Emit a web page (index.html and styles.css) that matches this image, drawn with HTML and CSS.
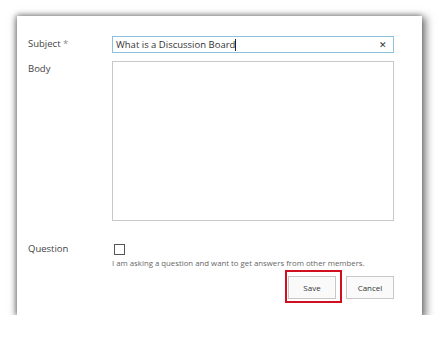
FILE: index.html
```html
<!DOCTYPE html>
<html lang="en">
<head>
  <meta charset="UTF-8" />
  <title>New Discussion</title>
  <link rel="stylesheet" href="styles.css">
</head>
<body>
  <div class="card">
    <div class="row">
      <label class="label" for="subject">Subject <span class="req">*</span></label>
      <div class="field subject-box">
        <span class="subject-text">What is a Discussion Board</span><span class="caret"></span>
        <span class="clear">&#x2715;</span>
      </div>
    </div>

    <div class="row">
      <label class="label">Body</label>
      <div class="field body-box"></div>
    </div>

    <div class="row question-row">
      <label class="label">Question</label>
      <div class="field">
        <span class="check"></span>
        <div class="hint">I am asking a question and want to get answers from other members.</div>
      </div>
    </div>

    <div class="actions">
      <span class="highlight"><button class="btn">Save</button></span>
      <button class="btn">Cancel</button>
    </div>
  </div>
</body>
</html>
```

FILE: styles.css
```css
body {
  margin: 0;
  padding: 16px 0 0 17px;
  background: #fff;
  font-family: "Open Sans", "Noto Sans", sans-serif;
}
.card {
  width: 405px;
  height: 299px;
  box-sizing: border-box;
  padding: 20px 28px 0 11px;
  background: #fff;
  box-shadow: 2px 3px 8px 2px rgba(0,0,0,0.5), -1px -1px 5px rgba(0,0,0,0.3);
}
.row {
  display: flex;
  margin-bottom: 8px;
}
.label {
  width: 84px;
  flex: none;
  font-size: 9.5px;
  color: #444;
  padding-top: 1px;
}
.req {
  color: #888;
}
.field {
  flex: 1;
}
.subject-box {
  height: 17px;
  box-sizing: border-box;
  border: 1px solid #8cc0dd;
  display: flex;
  align-items: center;
  padding: 0 0 0 3px;
  font-size: 9.5px;
  color: #333;
}
.caret {
  width: 1px;
  height: 12px;
  background: #222;
}
.clear {
  margin-left: auto;
  margin-right: 6px;
  font-size: 9px;
  color: #333;
}
.body-box {
  height: 160px;
  box-sizing: border-box;
  border: 1px solid #c8c8c8;
}
.question-row {
  margin-top: 23px;
  margin-bottom: 0;
}
.question-row .label {
  padding-top: 0;
  margin-top: -2px;
}
.check {
  display: block;
  width: 9px;
  height: 9px;
  border: 1px solid #555;
  margin-left: 2px;
}
.hint {
  font-size: 7.8px;
  color: #666;
  margin-top: 3px;
}
.actions {
  display: flex;
  justify-content: flex-end;
  gap: 10px;
  margin-top: 8px;
}
.btn {
  width: 48px;
  height: 23px;
  border: 1px solid #c8c8c8;
  background: #fafafa;
  font-family: inherit;
  font-size: 8px;
  color: #333;
  padding: 0;
}
.highlight {
  position: relative;
  display: flex;
}
.highlight::after {
  content: "";
  position: absolute;
  left: -3px;
  top: -6px;
  right: -6px;
  bottom: -4px;
  border: 2px solid #d0101e;
}
```
